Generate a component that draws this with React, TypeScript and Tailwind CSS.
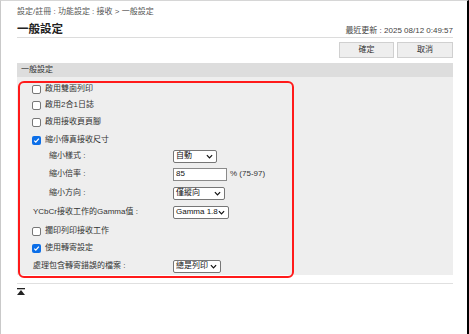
import React from "react";

const font = { fontFamily: '"Liberation Sans", "Noto Sans CJK TC", sans-serif' };

const Check = ({ on }: { on?: boolean }) =>
  on ? (
    <span className="flex h-[9px] w-[9px] items-center justify-center rounded-[2px] bg-[#0b6ee8]">
      <svg width="7" height="7" viewBox="0 0 10 10">
        <path d="M1.8 5.2 L4 7.4 L8.4 2.4" fill="none" stroke="white" strokeWidth="1.8" />
      </svg>
    </span>
  ) : (
    <span className="h-[9px] w-[9px] rounded-[2px] border border-[#777] bg-white" />
  );

const Chevron = () => (
  <svg width="7" height="5" viewBox="0 0 8 5">
    <path d="M1 1 L4 4 L7 1" fill="none" stroke="#111" strokeWidth="1.4" />
  </svg>
);

const Select = ({ value, w }: { value: string; w: string }) => (
  <div className={`flex h-[13px] items-center justify-between rounded-[2px] border border-[#767676] bg-white pl-[2px] pr-[3px] ${w}`}>
    <span className="text-[8px] leading-none text-[#111]">{value}</span>
    <Chevron />
  </div>
);

const CheckRow = ({ label, on, h }: { label: string; on?: boolean; h: string }) => (
  <div className={`flex items-center gap-[4px] pl-[15px] ${h}`}>
    <Check on={on} />
    <span className="text-[8px] leading-none text-[#333]">{label}</span>
  </div>
);

const FieldRow = ({ label, sub, h, children }: { label: string; sub?: boolean; h: string; children: React.ReactNode }) => (
  <div className={`flex items-center pl-[16px] ${h}`}>
    <span className={`text-[8px] leading-none text-[#333] ${sub ? "w-[140px] pl-[16px]" : "w-[140px]"}`}>{label}</span>
    {children}
  </div>
);

export default function App() {
  return (
    <div style={font} className="relative h-[334px] w-[469px] overflow-hidden border-l border-t border-l-[#c9c9c9] border-t-[#d6d6d6] border-r-2 border-r-black bg-white">
      <div className="ml-[16px] w-[436px] pt-[5px]">
        <div className="text-[8px] leading-[12px] text-[#555]">設定/註冊 : 功能設定 : 接收 &gt; 一般設定</div>
        <div className="mt-[3px] flex items-end justify-between border-b border-[#dcdcdc]">
          <div className="text-[11.5px] font-bold leading-[16px] text-[#222]">一般設定</div>
          <div className="text-[8px] leading-[12px] text-[#444]">最近更新 : 2025 08/12 0:49:57</div>
        </div>
        <div className="mt-[4px] flex justify-end gap-[3px]">
          <button className="h-[16px] w-[55px] border border-[#d0d0d0] bg-[#eeeeee] text-[8px] text-[#333]">確定</button>
          <button className="h-[16px] w-[56px] border border-[#d0d0d0] bg-[#eeeeee] text-[8px] text-[#333]">取消</button>
        </div>
        <div className="mt-[5px] flex h-[14px] items-center bg-[#dddddd] pl-[4px] text-[8px] text-[#333]">一般設定</div>
        <div className="relative bg-[#eeeeee] pt-[4px]">
          <CheckRow label="啟用雙面列印" h="h-[16px]" />
          <CheckRow label="啟用2合1日誌" h="h-[16px]" />
          <CheckRow label="啟用接收頁頁腳" h="h-[18px]" />
          <CheckRow label="縮小傳真接收尺寸" on h="h-[18px]" />
          <FieldRow label="縮小樣式 :" sub h="h-[14px]">
            <Select value="自動" w="w-[44px]" />
          </FieldRow>
          <FieldRow label="縮小倍率 :" sub h="h-[22px]">
            <div className="flex h-[13px] w-[54px] items-center border border-[#8a8a8a] bg-white pl-[2px] text-[8px] text-[#111]">85</div>
            <span className="ml-[3px] text-[8px] text-[#333]">% (75-97)</span>
          </FieldRow>
          <FieldRow label="縮小方向 :" sub h="h-[16px]">
            <Select value="僅縱向" w="w-[52px]" />
          </FieldRow>
          <FieldRow label="YCbCr接收工作的Gamma值 :" h="h-[22px]">
            <Select value="Gamma 1.8" w="w-[56px]" />
          </FieldRow>
          <CheckRow label="擱印列印接收工作" h="h-[16px]" />
          <CheckRow label="使用轉寄設定" on h="h-[18px]" />
          <FieldRow label="處理包含轉寄錯誤的檔案 :" h="h-[18px]">
            <Select value="總是列印" w="w-[48px]" />
          </FieldRow>
          <div className="pointer-events-none absolute left-[1px] top-[4px] h-[197px] w-[276px] rounded-[6px] border-2 border-[#ff1a1a]" />
        </div>
        <div className="mt-[8px] border-t border-[#e0e0e0]" />
        <div className="mt-[4px]">
          <svg width="8" height="7" viewBox="0 0 8 7">
            <rect x="0" y="0" width="8" height="1.3" fill="#222" />
            <path d="M4 2 L8 7 L0 7 Z" fill="#222" />
          </svg>
        </div>
      </div>
    </div>
  );
}
